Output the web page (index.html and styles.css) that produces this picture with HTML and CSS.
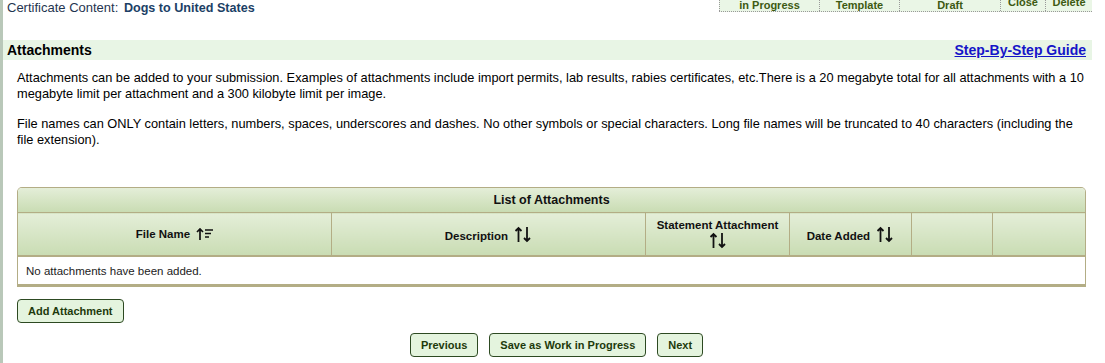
FILE: index.html
```html
<!DOCTYPE html>
<html lang="en">
<head>
  <meta charset="UTF-8">
  <title>Attachments</title>
  <link rel="stylesheet" href="styles.css">
</head>
<body>
  <div class="page">
    <div class="topbar">
      <div class="cert">Certificate Content: <strong>Dogs to United States</strong></div>
      <div class="tabs">
        <span class="tab t1">in Progress</span>
        <span class="tab t2">Template</span>
        <span class="tab t3">Draft</span>
        <span class="tab t4">Close</span>
        <span class="tab t5">Delete</span>
      </div>
    </div>

    <div class="section-head">
      <h3>Attachments</h3>
      <a href="#" class="guide">Step-By-Step Guide</a>
    </div>

    <div class="content">
      <p>Attachments can be added to your submission. Examples of attachments include import permits, lab results, rabies certificates, etc.There is a 20 megabyte total for all attachments with a 10 megabyte limit per attachment and a 300 kilobyte limit per image.</p>
      <p>File names can ONLY contain letters, numbers, spaces, underscores and dashes. No other symbols or special characters. Long file names will be truncated to 40 characters (including the file extension).</p>

      <div class="grid">
        <table>
          <tr><th colspan="6" class="caption">List of Attachments</th></tr>
          <tr class="cols">
            <th class="c1">File Name
              <svg class="sort" width="17" height="14" viewBox="0 0 17 14"><path d="M4 13V2M1 5l3-3 3 3" fill="none" stroke="#111" stroke-width="1.7"/><path d="M9 3h8M9 6.5h6M9 10h4" stroke="#111" stroke-width="1.3"/></svg>
            </th>
            <th class="c2">Description
              <svg class="sort" width="18" height="17" viewBox="0 0 18 17"><path d="M4.5 16V2M1.5 5l3-3 3 3M13 1v14M10 12l3 3 3-3" fill="none" stroke="#111" stroke-width="1.8"/></svg>
            </th>
            <th class="c3">Statement Attachment<br>
              <svg class="sort" width="18" height="17" viewBox="0 0 18 17"><path d="M4.5 16V2M1.5 5l3-3 3 3M13 1v14M10 12l3 3 3-3" fill="none" stroke="#111" stroke-width="1.8"/></svg>
            </th>
            <th class="c4">Date Added
              <svg class="sort" width="18" height="17" viewBox="0 0 18 17"><path d="M4.5 16V2M1.5 5l3-3 3 3M13 1v14M10 12l3 3 3-3" fill="none" stroke="#111" stroke-width="1.8"/></svg>
            </th>
            <th class="c5"></th>
            <th class="c6"></th>
          </tr>
          <tr><td colspan="6" class="empty">No attachments have been added.</td></tr>
        </table>
      </div>

      <button class="btn add">Add Attachment</button>

      <div class="nav">
        <button class="btn">Previous</button>
        <button class="btn">Save as Work in Progress</button>
        <button class="btn">Next</button>
      </div>
    </div>
  </div>
</body>
</html>
```

FILE: styles.css
```css
body {
  margin: 0;
  font-family: "Liberation Sans", Arial, sans-serif;
  background: #fff;
}
.page {
  border-left: 3px solid #b9c8b9;
  min-height: 363px;
  width: 1089px;
}
.topbar {
  display: flex;
  justify-content: space-between;
  height: 40px;
}
.cert {
  padding: 0 0 0 4px;
  font-size: 13px;
  color: #1f3550;
  line-height: 15px;
}
.cert strong {
  color: #1c3f66;
  margin-left: 2px;
  font-size: 12.6px;
}
.tabs {
  display: flex;
  height: 11px;
  background: #eaf6e6;
  border-bottom: 1px dotted #999;
  overflow: hidden;
}
.tab {
  display: block;
  border-left: 1px dotted #999;
  font-size: 11px;
  font-weight: bold;
  color: #3d5a12;
  text-align: center;
  line-height: 10px;
  height: 11px;
  overflow: hidden;
}
.t1 { width: 99px; }
.t2 { width: 79px; }
.t3 { width: 100px; }
.t4 { width: 44px; line-height: 5px; }
.t5 { width: 46px; line-height: 5px; }
.section-head {
  display: flex;
  justify-content: space-between;
  align-items: center;
  height: 20px;
  background: #e8f5e5;
  padding: 0 6px 0 4px;
}
.section-head h3 {
  margin: 0;
  font-size: 14px;
  color: #000;
}
.guide {
  font-size: 14px;
  font-weight: bold;
  color: #1515c8;
}
.content {
  padding: 10px 0 0 14px;
}
.content p {
  margin: 0 0 14px;
  font-size: 12.8px;
  line-height: 16px;
  color: #000;
  padding-right: 2px;
}
.grid {
  margin-top: 39px;
  width: 1067px;
  border: 1px solid #b3ad85;
  border-bottom: 3px solid #b3ad85;
  border-radius: 5px 5px 0 0;
  overflow: hidden;
}
.grid table {
  width: 100%;
  border-collapse: collapse;
  font-size: 11.5px;
}
.grid th {
  background: linear-gradient(#e4eed8, #c9dcb3);
  color: #111;
  font-weight: bold;
  border-left: 1px solid #b3ad85;
  padding: 0;
}
.grid th:first-child { border-left: 0; }
.caption {
  height: 24px;
  font-size: 12.5px;
  border-bottom: 1px solid #b3ad85;
}
.cols th {
  height: 42px;
  border-bottom: 2px solid #b3ad85;
  line-height: 13px;
}
.c1 { width: 313px; }
.c2 { width: 313px; }
.c3 { width: 143px; }
.c4 { width: 121px; }
.c5 { width: 80px; }
.sort {
  vertical-align: -3px;
  margin-left: 3px;
}
.c3 .sort { margin-left: 0; }
.empty {
  height: 27px;
  padding: 0 0 0 8px;
  color: #222;
  background: #fff;
}
.btn {
  font-family: "Liberation Sans", Arial, sans-serif;
  font-size: 11px;
  font-weight: bold;
  color: #1d3a0c;
  background: #e4f4de;
  border: 1px solid #2d4a22;
  border-radius: 4px;
  height: 24px;
  padding: 0 10px;
  white-space: nowrap;
  cursor: pointer;
}
.add {
  margin-top: 12px;
}
.nav {
  display: flex;
  justify-content: center;
  gap: 11px;
  margin-top: 10px;
  padding-left: 4px;
}
```
